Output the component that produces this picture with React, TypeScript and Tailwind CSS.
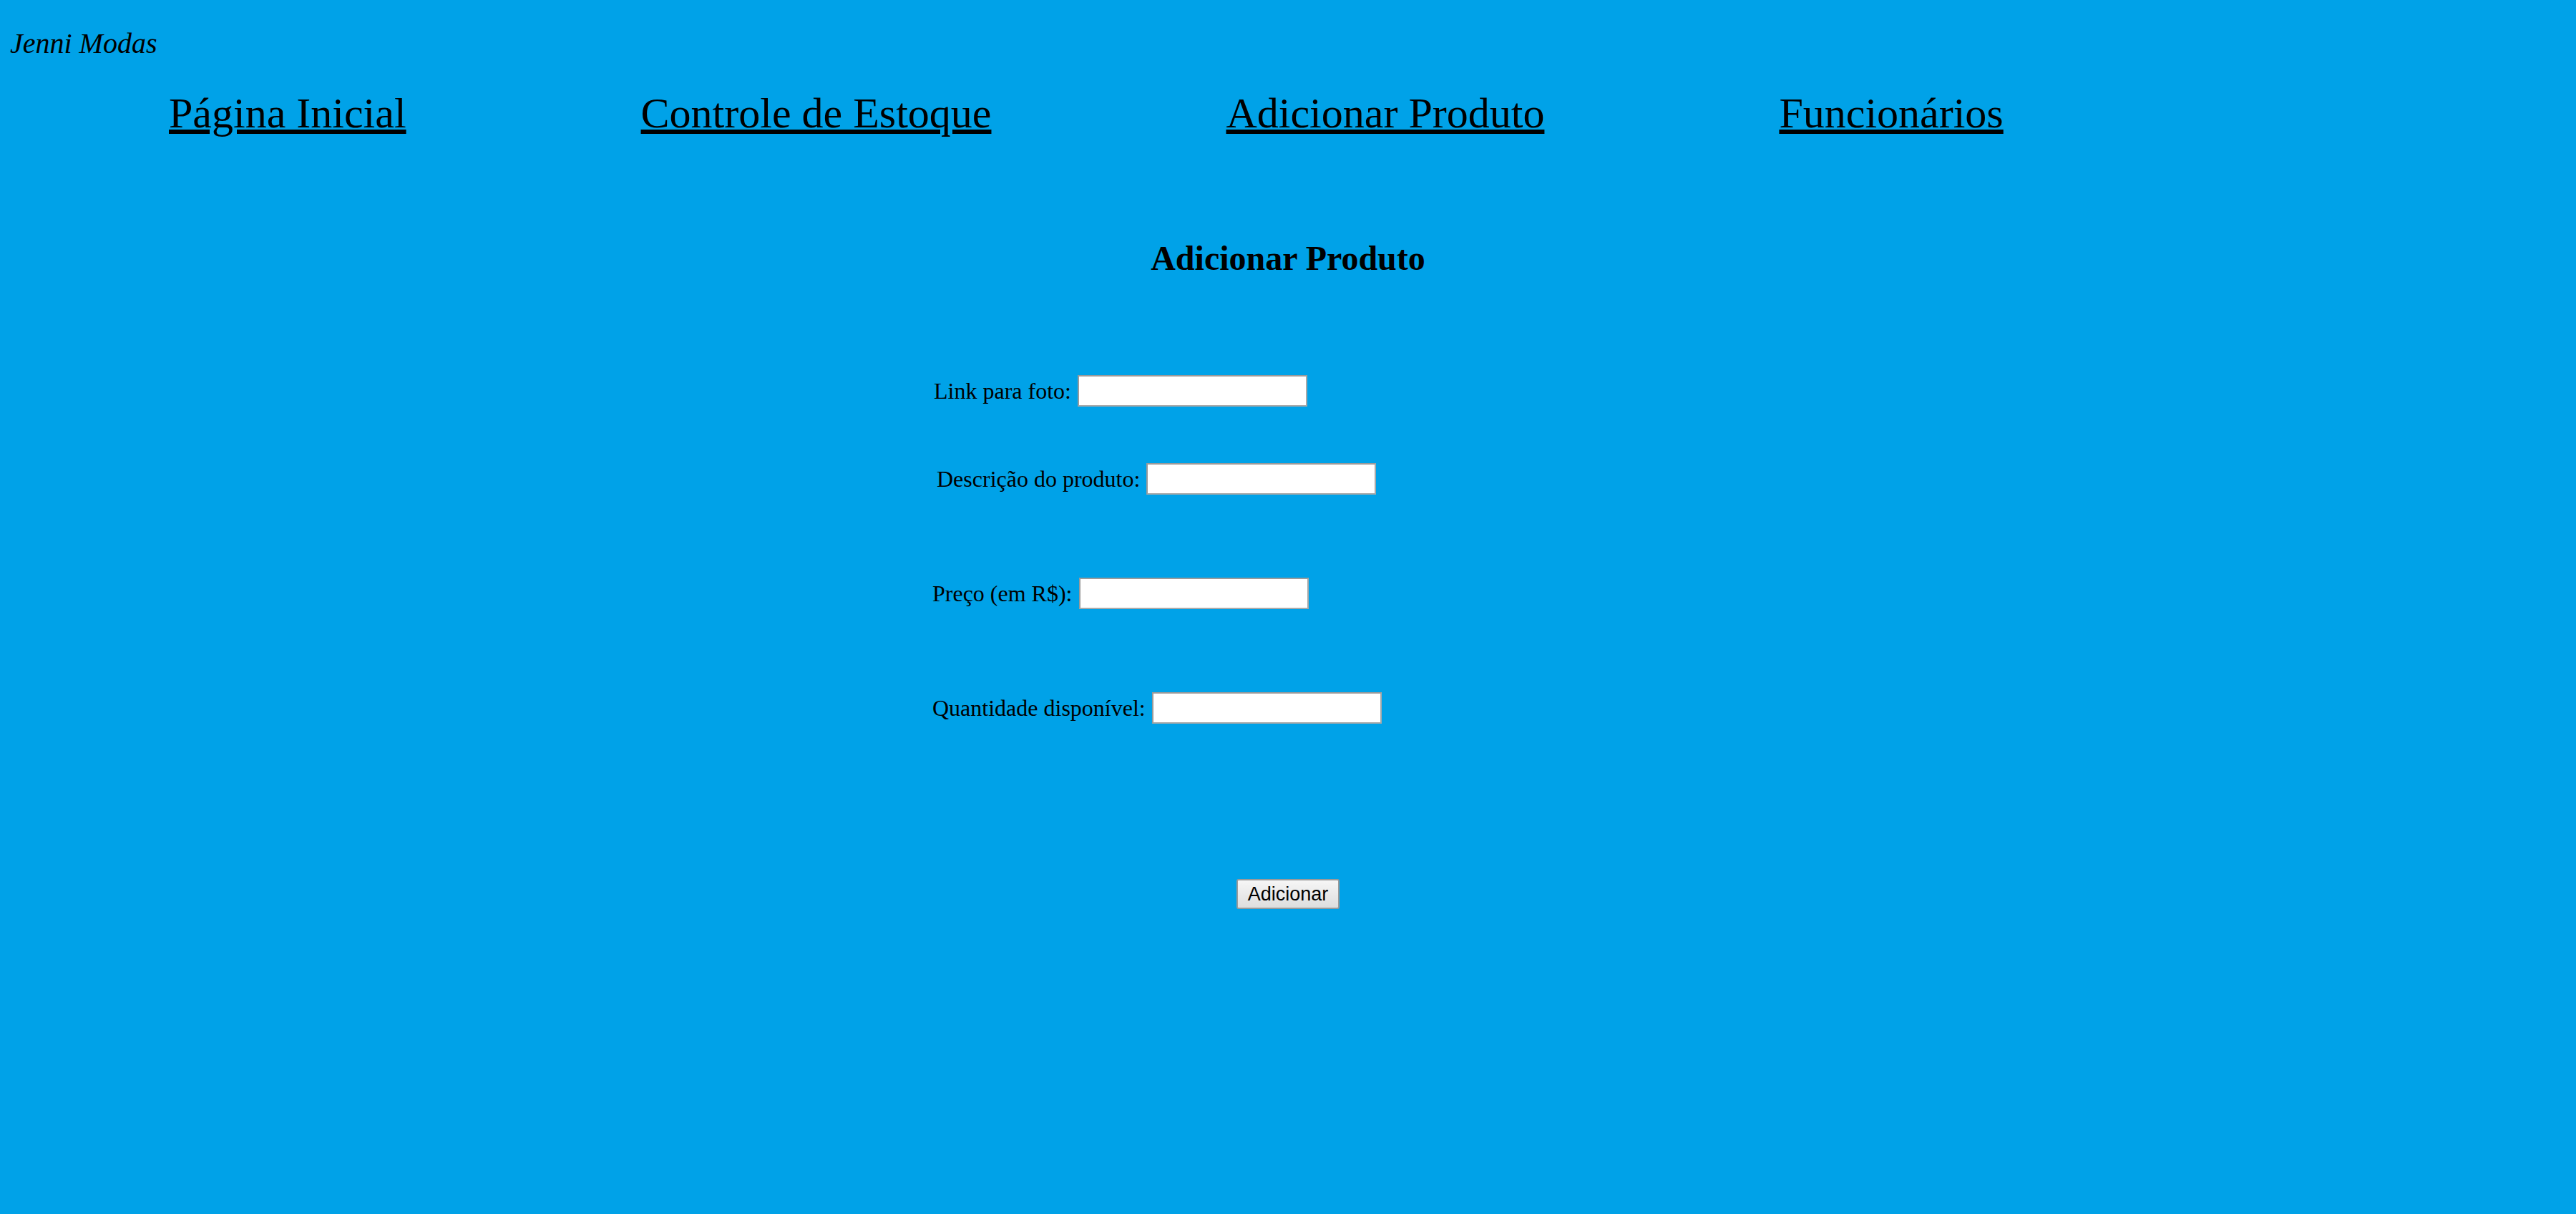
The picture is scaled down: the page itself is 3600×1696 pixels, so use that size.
const navLinks = ["Página Inicial", "Controle de Estoque", "Adicionar Produto", "Funcionários"];

const fields = [
  { id: "foto", label: "Link para foto:", className: "mt-[139px] ml-[2px]" },
  { id: "descricao", label: "Descrição do produto:", className: "mt-[79px] ml-[6px]" },
  { id: "preco", label: "Preço (em R$):", className: "mt-[116px]" },
  { id: "quantidade", label: "Quantidade disponível:", className: "mt-[116px]" }
];

export default function App() {
  return (
    <div className="min-h-screen bg-[#00a2e8] font-['Liberation_Serif',_'Times_New_Roman',_serif] text-black">
      <header>
        <p className="pl-[14px] pt-[41px] text-[40px] italic leading-none">Jenni Modas</p>
        <nav className="mt-[47px] flex gap-[328px] pl-[236px]">
          {navLinks.map((link) => (
            <a key={link} href="#" className="text-[60px] leading-none text-black underline">
              {link}
            </a>
          ))}
        </nav>
      </header>

      <main>
        <h2 className="mt-[149px] text-center text-[48px] font-bold leading-none">Adicionar Produto</h2>

        <form className="flex flex-col pl-[1303px]">
          {fields.map((field) => (
            <div key={field.id} className={`flex items-center gap-[9px] ${field.className}`}>
              <label htmlFor={field.id} className="text-[32px] leading-none">
                {field.label}
              </label>
              <input
                id={field.id}
                type="text"
                className="h-[44px] w-[321px] border-2 border-[#a9a9a9] border-t-[#9a9a9a] border-l-[#9a9a9a] bg-white"
              />
            </div>
          ))}
        </form>

        <div className="mt-[217px] flex justify-center">
          <button
            type="button"
            className="h-[42px] w-[144px] rounded-[3px] border-2 border-[#9a9a9a] bg-gradient-to-b from-[#f6f6f6] to-[#dedede] font-['Liberation_Sans',_Arial,_sans-serif] text-[27px] leading-none text-black"
          >
            Adicionar
          </button>
        </div>
      </main>
    </div>
  );
}
